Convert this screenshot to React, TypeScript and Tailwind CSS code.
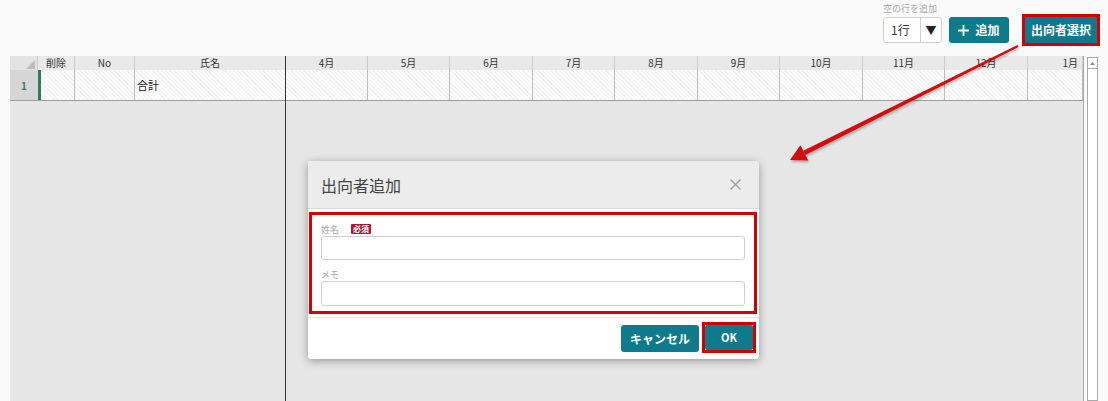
import React from 'react';

const FONT = 'font-["Noto_Sans_CJK_JP","Noto_Sans",sans-serif]';
const HATCH =
  'bg-[image:repeating-linear-gradient(45deg,#f2f2f2_0px,#f2f2f2_1px,#fbfbfb_1px,#fbfbfb_3px)]';

const MONTHS = [
  { label: '4月', w: 'w-[82px]' },
  { label: '5月', w: 'w-[82px]' },
  { label: '6月', w: 'w-[83px]' },
  { label: '7月', w: 'w-[82px]' },
  { label: '8月', w: 'w-[83px]' },
  { label: '9月', w: 'w-[82px]' },
  { label: '10月', w: 'w-[83px]' },
  { label: '11月', w: 'w-[82px]' },
  { label: '12月', w: 'w-[83px]' },
  { label: '1月', w: 'flex-1' },
];

function HeadCell({ w, children, align = 'center' }: { w: string; children?: React.ReactNode; align?: string }) {
  return (
    <div
      className={`${w} flex h-full shrink-0 items-center border-r border-[#cacaca] bg-[#e9e9e9] px-1 text-[10px] leading-none text-[#333] ${
        align === 'right' ? 'justify-end' : 'justify-center'
      }`}
    >
      {children}
    </div>
  );
}

function BodyCell({ w, children, extra = '' }: { w: string; children?: React.ReactNode; extra?: string }) {
  return (
    <div
      className={`${w} ${HATCH} flex h-full shrink-0 items-center border-r border-[#bdbdbd] text-[11px] text-[#222] ${extra}`}
    >
      {children}
    </div>
  );
}

function Arrow() {
  return (
    <svg className="pointer-events-none absolute top-0 left-0" width="1108" height="401" viewBox="0 0 1108 401">
      <defs>
        <filter id="sh" x="-10%" y="-10%" width="120%" height="130%">
          <feDropShadow dx="1" dy="2" stdDeviation="1" floodColor="#000" floodOpacity="0.25" />
        </filter>
      </defs>
      <g filter="url(#sh)" fill="#d10a0a">
        <polygon points="1018.5,46.9 1017.5,45.1 803.2,150.8 805.4,155.0" />
        <polygon points="790,160 800.4,145.2 808.2,160.4" />
      </g>
    </svg>
  );
}

function Dialog() {
  return (
    <div className="absolute top-[161px] left-[308px] flex h-[198px] w-[451px] flex-col rounded-[3px] bg-white shadow-[0_2px_8px_rgba(0,0,0,0.35)]">
      <div className="flex h-[48px] shrink-0 items-center justify-between rounded-t-[3px] border-b border-[#d9d9d9] bg-[#ececec] pr-[18px] pl-[13px]">
        <span className="text-[16px] leading-none text-[#444]">出向者追加</span>
        <svg width="11" height="11" viewBox="0 0 11 11">
          <path d="M0.5 0.5 L10.5 10.5 M10.5 0.5 L0.5 10.5" stroke="#9a9a9a" strokeWidth="1.3" />
        </svg>
      </div>

      <div className="mt-[3px] ml-px w-[448px] border-[3px] border-[#d40000] px-[9px] pt-[8px] pb-[5px]">
        <div className="flex h-[12px] items-center">
          <span className="text-[9px] leading-none text-[#aaa]">姓名</span>
          <span className="ml-[12px] flex h-[10px] items-center rounded-[1px] bg-[#b3162f] px-[2px] text-[8px] leading-none font-bold text-white">
            必須
          </span>
        </div>
        <div className="mt-px h-[24px] w-full rounded-[3px] border border-[#cfcfcf] bg-white" />
        <div className="mt-[8px] flex h-[12px] items-center">
          <span className="text-[9px] leading-none text-[#aaa]">メモ</span>
        </div>
        <div className="mt-px h-[25px] w-full rounded-[3px] border border-[#cfcfcf] bg-white" />
      </div>

      <div className="mt-[3px] flex flex-1 items-start justify-end gap-[3px] border-t border-[#e2e2e2] pr-[3px]">
        <button className="mt-[7px] flex h-[27px] w-[78px] items-center justify-center rounded-[3px] bg-[#0f7a8b] text-[12px] font-bold text-white">
          キャンセル
        </button>
        <div className="mt-[4px] h-[31px] w-[54px] border-[3px] border-[#d40000]">
          <button className="flex h-full w-full items-center justify-center rounded-[2px] bg-[#0f7a8b] text-[11px] font-bold text-white">
            OK
          </button>
        </div>
      </div>
    </div>
  );
}

export default function App() {
  return (
    <div className={`${FONT} relative h-[401px] w-[1108px] overflow-hidden bg-[#fafafa]`}>
      {/* toolbar */}
      <div className="flex h-[56px] justify-end pr-[8px]">
        <div className="flex flex-col pt-[3px]">
          <span className="h-[12px] text-[9px] leading-[12px] text-[#aaa]">空の行を追加</span>
          <div className="mt-[2px] flex h-[26px] w-[59px] rounded-[3px] border border-[#cfcfcf] bg-white">
            <span className="flex flex-1 items-center pl-[7px] text-[12px] text-[#333]">1行</span>
            <span className="flex w-[21px] items-center justify-center border-l border-[#cfcfcf] text-[11px] text-[#222]">
              ▼
            </span>
          </div>
        </div>
        <button className="mt-[17px] ml-[7px] flex h-[26px] w-[60px] items-center justify-center gap-[6px] rounded-[3px] bg-[#0f7a8b] text-[12px] font-bold text-white">
          <svg width="11" height="11" viewBox="0 0 11 11">
            <path d="M5.5 0 V11 M0 5.5 H11" stroke="#fff" strokeWidth="1.8" />
          </svg>
          追加
        </button>
        <div className="mt-[14px] ml-[13px] h-[32px] w-[78px] border-[3px] border-[#d40000]">
          <button className="flex h-full w-full items-center justify-center bg-[#0f7a8b] text-[12px] font-bold text-white">
            出向者選択
          </button>
        </div>
      </div>

      {/* spreadsheet */}
      <div className="flex h-[345px] pl-[10px]">
        <div className="flex w-[276px] shrink-0 flex-col border-r border-[#333] bg-[#e6e6e6]">
          <div className="flex h-[14px] shrink-0">
            <div className="relative h-full w-[28px] shrink-0 border-r border-[#cacaca] bg-[#e3e3e3]">
              <svg className="absolute right-[2px] bottom-[1px]" width="9" height="9" viewBox="0 0 9 9">
                <polygon points="9,0 9,9 0,9" fill="#bdbdbd" />
              </svg>
            </div>
            <HeadCell w="w-[37px]">削除</HeadCell>
            <HeadCell w="w-[60px]">No</HeadCell>
            <div className="flex h-full flex-1 items-center justify-center bg-[#e9e9e9] text-[10px] leading-none text-[#333]">
              氏名
            </div>
          </div>
          <div className="flex h-[31px] shrink-0 border-b border-[#9e9e9e]">
            <div className="flex h-full w-[28px] shrink-0 items-center justify-center bg-[#d6d6d6] text-[10px] font-bold text-[#3b7a5a]">
              1
            </div>
            <BodyCell w="w-[37px]" extra="border-l-[3px] border-l-[#2f7d55]" />
            <BodyCell w="w-[60px]" />
            <div className={`${HATCH} flex h-full flex-1 items-center pl-[2px] text-[11px] text-[#222]`}>合計</div>
          </div>
          <div className="flex-1" />
        </div>

        <div className="flex w-[798px] shrink-0 flex-col border-r border-[#a8a8a8] bg-[#e6e6e6]">
          <div className="flex h-[14px] shrink-0">
            {MONTHS.map((m) => (
              <HeadCell key={m.label} w={m.w} align={m.label === '1月' ? 'right' : 'center'}>
                {m.label}
              </HeadCell>
            ))}
          </div>
          <div className="flex h-[31px] shrink-0 border-b border-[#9e9e9e]">
            {MONTHS.map((m) => (
              <BodyCell key={m.label} w={m.w} />
            ))}
          </div>
          <div className="flex-1" />
        </div>

        <div className="mt-px ml-[3px] flex w-[11px] shrink-0 flex-col border border-[#a9a9a9] bg-white">
          <div className="flex h-[11px] items-center justify-center border-b border-[#a9a9a9]">
            <svg width="5" height="3" viewBox="0 0 5 3">
              <polygon points="2.5,0 5,3 0,3" fill="#888" />
            </svg>
          </div>
        </div>
      </div>

      <Dialog />
      <Arrow />
    </div>
  );
}
